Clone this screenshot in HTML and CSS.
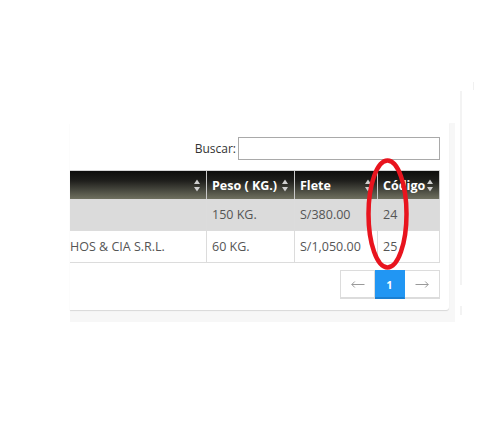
FILE: index.html
```html
<!DOCTYPE html>
<html lang="es">
<head>
<meta charset="utf-8">
<title>Tabla</title>
<link rel="stylesheet" href="styles.css">
</head>
<body>
<div class="stage">
  <div class="panel">
    <div class="card">
      <div class="search">
        <label class="search-label" for="q">Buscar:</label>
        <input id="q" class="search-input" type="search">
      </div>
      <table class="grid">
        <thead>
          <tr>
            <th class="c1"><div class="th-in"><span></span><svg class="sort" viewBox="0 0 6 13" width="6" height="13"><polygon points="0,5 3,0.5 6,5"/><polygon points="0,8 3,12.5 6,8"/></svg></div></th>
            <th class="c2"><div class="th-in"><span>Peso ( KG.)</span><svg class="sort" viewBox="0 0 6 13" width="6" height="13"><polygon points="0,5 3,0.5 6,5"/><polygon points="0,8 3,12.5 6,8"/></svg></div></th>
            <th class="c3"><div class="th-in"><span>Flete</span><svg class="sort" viewBox="0 0 6 13" width="6" height="13"><polygon points="0,5 3,0.5 6,5"/><polygon points="0,8 3,12.5 6,8"/></svg></div></th>
            <th class="c4"><div class="th-in"><span>Código</span><svg class="sort" viewBox="0 0 6 13" width="6" height="13"><polygon points="0,5 3,0.5 6,5"/><polygon points="0,8 3,12.5 6,8"/></svg></div></th>
          </tr>
        </thead>
        <tbody>
          <tr class="odd">
            <td class="first"></td>
            <td>150 KG.</td>
            <td>S/380.00</td>
            <td>24</td>
          </tr>
          <tr>
            <td class="first">HOS &amp; CIA S.R.L.</td>
            <td>60 KG.</td>
            <td>S/1,050.00</td>
            <td>25</td>
          </tr>
        </tbody>
      </table>
      <div class="pager">
        <span class="pg" aria-label="Anterior"><svg class="arrow" width="14" height="7" viewBox="0 0 14 7"><path d="M13.5 3.5H0.8M3.8 0.5L0.8 3.5L3.8 6.5" fill="none" stroke="#9a9a9a" stroke-width="1"/></svg></span>
        <span class="pg active">1</span>
        <span class="pg" aria-label="Siguiente"><svg class="arrow" width="14" height="7" viewBox="0 0 14 7"><path d="M0.5 3.5H13.2M10.2 0.5L13.2 3.5L10.2 6.5" fill="none" stroke="#9a9a9a" stroke-width="1"/></svg></span>
      </div>
    </div>
  </div>
  <div class="rail">
    <div class="seg seg-a"></div>
    <div class="seg seg-b"></div>
  </div>
  <div class="mark"></div>
</div>
<svg class="annot" width="43" height="112" viewBox="0 0 43 112">
  <ellipse cx="21.5" cy="56" rx="19" ry="53.5" fill="none" stroke="#e8141e" stroke-width="4.5"/>
</svg>
</body>
</html>
```

FILE: styles.css
```css
html, body {
  margin: 0;
  padding: 0;
}
body {
  width: 501px;
  height: 428px;
  overflow: hidden;
  background: #fff;
  font-family: "Open Sans", "Noto Sans", sans-serif;
  position: relative;
}
.stage {
  display: flex;
  align-items: flex-start;
  padding-left: 70px;
}
.panel {
  margin-top: 123px;
  width: 385px;
  height: 199px;
  background: #f7f7f7;
  box-sizing: border-box;
  padding: 0 6px 12px 0;
}
.card {
  width: 379px;
  height: 187px;
  background: #fff;
  border-radius: 0 0 3px 0;
  box-shadow: 0 1px 1px rgba(0, 0, 0, 0.13);
  box-sizing: border-box;
  padding: 14px 9px 0 0;
}
.search {
  display: flex;
  justify-content: flex-end;
  align-items: center;
  height: 23px;
}
.search-label {
  font-size: 12px;
  color: #333;
  margin-right: 2px;
}
.search-input {
  width: 202px;
  height: 23px;
  box-sizing: border-box;
  border: 1px solid #a9a9a9;
  margin: 0;
  padding: 0 4px;
  background: #fff;
  outline: none;
}
.grid {
  margin-top: 10px;
  width: 370px;
  table-layout: fixed;
  border-collapse: separate;
  border-spacing: 0;
  font-size: 12.5px;
  border-top: 1px solid #d4d4d4;
}
.grid th, .grid td {
  box-sizing: border-box;
  border-right: 1px solid #dcdcdc;
  padding: 0 6px 0 5px;
  text-align: left;
  white-space: nowrap;
  overflow: hidden;
}
.c1 { width: 137px; }
.c2 { width: 88px; }
.c3 { width: 83px; }
.c4 { width: 62px; }
.grid th {
  height: 28px;
  color: #fff;
  font-weight: 700;
  background: linear-gradient(to bottom, #0d0d0c 0%, #1f1f1c 35%, #4a4b41 70%, #6f705f 100%);
  border-right-color: #c9c9c9;
}
.th-in {
  display: flex;
  align-items: center;
  justify-content: space-between;
}
.sort {
  flex: none;
  fill: #cfcfcf;
}
.grid td {
  height: 32px;
  color: #555;
  border-bottom: 1px solid #dcdcdc;
}
.grid td.first {
  padding-left: 0;
}
.odd td {
  background: #dbdbdb;
}
.pager {
  margin-top: 7px;
  display: flex;
  justify-content: flex-end;
}
.pg {
  box-sizing: border-box;
  height: 29px;
  width: 35px;
  display: flex;
  align-items: center;
  justify-content: center;
  border: 1px solid #dcdcdc;
  border-bottom-width: 2px;
  color: #9a9a9a;
  font-size: 14px;
  background: #fff;
}
.pg + .pg {
  border-left: 0;
}
.pg.active {
  width: 30px;
  background: #2196f3;
  border-color: #2196f3;
  border-bottom-color: #1b7fd1;
  color: #fff;
  font-size: 11px;
  font-weight: 700;
}
.arrow {
  display: block;
}
.rail {
  margin-left: 5px;
  margin-top: 91px;
  display: flex;
  flex-direction: column;
  gap: 21px;
}
.seg {
  width: 2px;
  background: #f3f3f3;
}
.seg-a { height: 194px; }
.seg-b { height: 9px; }
.mark {
  margin-left: 11px;
  margin-top: 82px;
  width: 1px;
  height: 8px;
  background: #f0f0f0;
}
.annot {
  position: absolute;
  left: 366px;
  top: 158px;
}
```
